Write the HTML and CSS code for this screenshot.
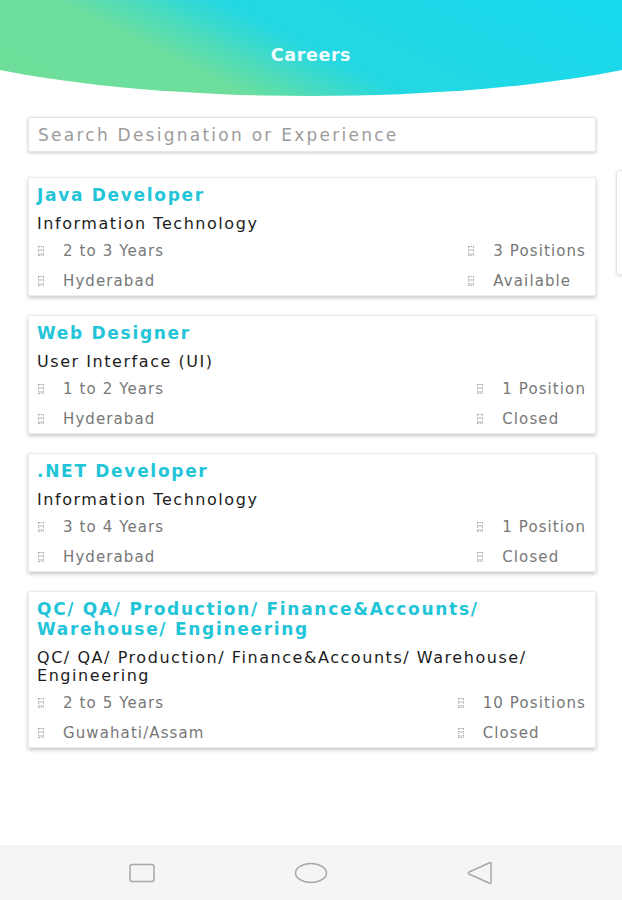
FILE: index.html
```html
<!DOCTYPE html>
<html>
<head>
<meta charset="utf-8">
<link rel="stylesheet" href="styles.css">
</head>
<body>
<div class="app">
  <header class="header"><h1 class="header-title">Careers</h1></header>
  <main class="content">
    <div class="search">Search Designation or Experience</div>
    <div class="peek"></div>
    <div class="list">
      <div class="card">
        <div class="card-title">Java Developer</div>
        <div class="card-sub">Information Technology</div>
        <div class="meta">
          <div class="meta-item"><span class="ico"></span>2 to 3 Years</div>
          <div class="meta-item"><span class="ico"></span>3 Positions</div>
          <div class="meta-item"><span class="ico"></span>Hyderabad</div>
          <div class="meta-item"><span class="ico"></span>Available</div>
        </div>
      </div>
      <div class="card">
        <div class="card-title">Web Designer</div>
        <div class="card-sub">User Interface (UI)</div>
        <div class="meta">
          <div class="meta-item"><span class="ico"></span>1 to 2 Years</div>
          <div class="meta-item"><span class="ico"></span>1 Position</div>
          <div class="meta-item"><span class="ico"></span>Hyderabad</div>
          <div class="meta-item"><span class="ico"></span>Closed</div>
        </div>
      </div>
      <div class="card">
        <div class="card-title">.NET Developer</div>
        <div class="card-sub">Information Technology</div>
        <div class="meta">
          <div class="meta-item"><span class="ico"></span>3 to 4 Years</div>
          <div class="meta-item"><span class="ico"></span>1 Position</div>
          <div class="meta-item"><span class="ico"></span>Hyderabad</div>
          <div class="meta-item"><span class="ico"></span>Closed</div>
        </div>
      </div>
      <div class="card">
        <div class="card-title">QC/ QA/ Production/ Finance&amp;Accounts/<br>Warehouse/ Engineering</div>
        <div class="card-sub">QC/ QA/ Production/ Finance&amp;Accounts/ Warehouse/<br>Engineering</div>
        <div class="meta">
          <div class="meta-item"><span class="ico"></span>2 to 5 Years</div>
          <div class="meta-item"><span class="ico"></span>10 Positions</div>
          <div class="meta-item"><span class="ico"></span>Guwahati/Assam</div>
          <div class="meta-item"><span class="ico"></span>Closed</div>
        </div>
      </div>
    </div>
  </main>
  <nav class="navbar">
    <svg class="nav-ico" width="26" height="20" viewBox="0 0 26 20"><rect x="1" y="1.5" width="24" height="17" rx="2.5" fill="none" stroke="#a8a8a8" stroke-width="1.5"/></svg>
    <svg class="nav-ico" width="34" height="22" viewBox="0 0 34 22"><ellipse cx="17" cy="11" rx="15.5" ry="9.5" fill="none" stroke="#a8a8a8" stroke-width="1.5"/></svg>
    <svg class="nav-ico" width="28" height="24" viewBox="0 0 28 24"><path d="M25 2.5 L25 21.5 Q25 23 23.6 22.3 L3 13 Q1.5 12 3 11 L23.6 1.7 Q25 1 25 2.5 Z" fill="none" stroke="#a8a8a8" stroke-width="1.5" stroke-linejoin="round"/></svg>
  </nav>
</div>
</body>
</html>
```
FILE: styles.css
```css
* { box-sizing: border-box; }
html, body { margin: 0; padding: 0; background: #ffffff; }
body { font-family: "DejaVu Sans", "Liberation Sans", sans-serif; }

.app {
  position: relative;
  width: 622px;
  min-height: 900px;
  display: flex;
  flex-direction: column;
  overflow: hidden;
}

.header {
  height: 96px;
  background: linear-gradient(27deg, #6ede9b 0%, #6ede9c 30%, #24d8e2 50%, #17d9ee 100%);
  clip-path: ellipse(455px 96px at 50% 0);
  display: flex;
  justify-content: center;
  padding-top: 44px;
}
.header-title {
  margin: 0;
  font-size: 17.5px;
  line-height: 22px;
  font-weight: bold;
  letter-spacing: 0.6px;
  color: #f0fcff;
}

.content {
  flex: 1;
  padding: 21px 26px 0 28px;
}

.search {
  height: 35px;
  display: flex;
  align-items: center;
  padding-left: 9px;
  font-size: 17px;
  letter-spacing: 2.25px;
  color: #9c9c9c;
  background: #fff;
  border: 1px solid #e6e6e6;
  box-shadow: 0 1px 3px rgba(0,0,0,0.22);
}

.peek {
  position: absolute;
  left: 616px;
  top: 170px;
  width: 20px;
  height: 105px;
  border: 1px solid #e3e3e3;
  border-radius: 3px;
  box-shadow: 0 1px 3px rgba(0,0,0,0.12);
}

.list {
  margin-top: 25px;
  display: flex;
  flex-direction: column;
  gap: 19px;
}

.card {
  background: #fff;
  border: 1px solid #ececec;
  box-shadow: 0 2px 4px rgba(0,0,0,0.22);
  padding: 7px 9px 5px 8px;
}

.card-title {
  font-size: 17px;
  line-height: 20px;
  font-weight: bold;
  letter-spacing: 1.7px;
  color: #22c4d8;
}

.card-sub {
  margin-top: 10px;
  font-size: 16px;
  line-height: 18px;
  letter-spacing: 1.55px;
  color: #1c1c1c;
}

.meta {
  margin-top: 9px;
  display: grid;
  grid-template-columns: 1fr auto;
  row-gap: 12px;
}

.meta-item {
  display: flex;
  align-items: center;
  font-size: 15px;
  line-height: 18px;
  letter-spacing: 1.1px;
  color: #777777;
}

.ico {
  display: inline-block;
  width: 6px;
  height: 10px;
  margin: 0 19px 0 1px;
  border: 1px dotted #b4b4b4;
  background: repeating-linear-gradient(0deg, #dcdcdc 0 2px, transparent 2px 4px);
}

.navbar {
  height: 55px;
  background: #f5f5f5;
  display: flex;
  align-items: center;
  justify-content: space-between;
  padding: 0 128px 0 129px;
}
.nav-ico { display: block; }
```
